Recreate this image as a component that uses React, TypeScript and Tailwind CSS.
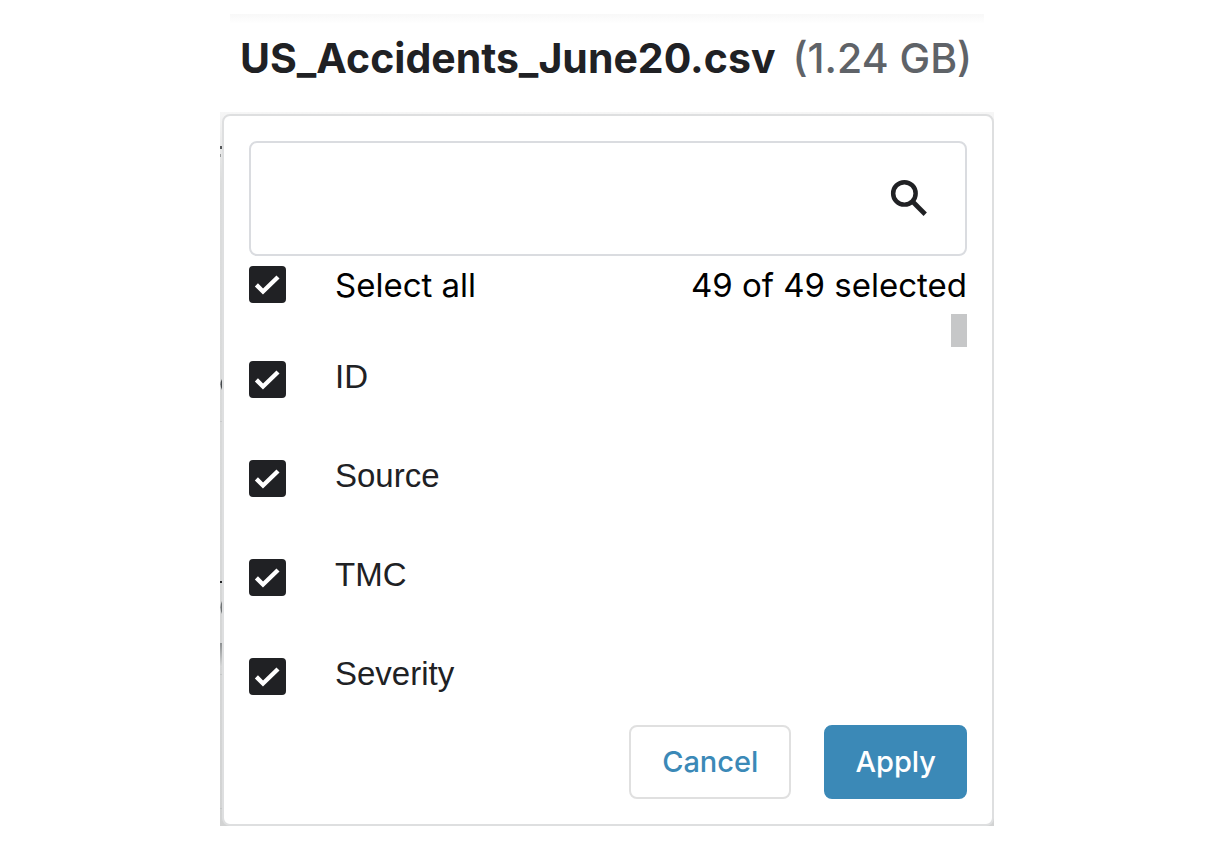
import { useState } from "react";

const COLUMNS = ["ID", "Source", "TMC", "Severity"];
const TOTAL = 49;

type CheckProps = {
  id: string;
  checked: boolean;
  onChange: () => void;
};

function Check({ id, checked, onChange }: CheckProps) {
  return (
    <span className="grid size-[37px] shrink-0">
      <input
        id={id}
        type="checkbox"
        checked={checked}
        onChange={onChange}
        className="col-start-1 row-start-1 size-full appearance-none rounded border-2 border-[#202124] bg-white checked:bg-[#202124]"
      />
      {checked && (
        <svg
          viewBox="0 0 37 37"
          aria-hidden="true"
          className="pointer-events-none col-start-1 row-start-1 size-full fill-none stroke-white"
        >
          <path d="M7.4 18.9L14 25.5L29 11" strokeWidth="4.4" />
        </svg>
      )}
    </span>
  );
}

function SearchIcon() {
  return (
    <svg
      viewBox="0 0 24 24"
      aria-hidden="true"
      className="size-[49px] fill-none stroke-[#202124]"
    >
      <circle cx="9.5" cy="9.5" r="5.5" strokeWidth="2.2" />
      <path d="M13.6 13.6L19.7 19.7" strokeWidth="2.3" />
    </svg>
  );
}

/* Slivers of the page that show beside the open panel. */
function EdgeMarks() {
  return (
    <svg
      aria-hidden="true"
      viewBox="0 0 2 714"
      className="pointer-events-none absolute top-0 left-0 h-[714px] w-0.5"
    >
      <defs>
        <linearGradient id="fade" x1="0" y1="0" x2="0" y2="1">
          <stop offset="0" stopColor="#8d9091" />
          <stop offset="1" stopColor="#d8d9d9" />
        </linearGradient>
      </defs>
      <rect y="34" width="2" height="3" fill="#55585a" />
      <rect y="42" width="1" height="3" fill="#9a9c9d" />
      <path d="M2 267Q-1 272 2 278Z" fill="#44484b" />
      <rect y="309" width="2" height="1" fill="#c8c9ca" />
      <rect y="469" width="2" height="2" fill="#222426" />
      <path d="M2 489Q-1 495 2 502Z" fill="#6f7375" />
      <rect y="531" width="2" height="24" fill="url(#fade)" />
      <rect y="562" width="2" height="1" fill="#c4c6c6" />
      <rect y="696" width="2" height="1" fill="#c4c6c6" />
    </svg>
  );
}

export default function App() {
  const [query, setQuery] = useState("");
  const [off, setOff] = useState<string[]>([]);

  const toggle = (name: string) =>
    setOff((prev) =>
      prev.includes(name) ? prev.filter((n) => n !== name) : [...prev, name],
    );
  const visible = COLUMNS.filter((name) =>
    name.toLowerCase().includes(query.toLowerCase()),
  );

  return (
    <div className="bg-white pt-3.5 pr-2.5 pb-9 font-['Inter',sans-serif]">
      <main className="mx-auto max-w-[774px]">
        <header className="mx-2.5 bg-linear-to-b from-[#f8f8f8] to-white to-10% px-2.5 pt-5 pb-[30px]">
          <h1 className="flex items-center gap-[17px] text-[41px] leading-[48px] font-bold whitespace-nowrap text-[#202124]">
            US_Accidents_June20.csv
            <span className="font-medium text-[#5f6368]">(1.24 GB)</span>
          </h1>
        </header>

        <div className="relative bg-linear-to-b from-[#f6f6f6] via-[#dcdddd] via-10% to-[#d2d3d3] pt-0.5 pl-0.5">
          <EdgeMarks />
          <form
            className="rounded-lg border-2 border-[#dedfe0] bg-white p-[25px]"
            onSubmit={(e) => e.preventDefault()}
          >
            <div className="flex h-[115px] items-center rounded-lg border-2 border-[#dadce0] pr-[31px]">
              <input
                type="text"
                aria-label="Search columns"
                value={query}
                onChange={(e) => setQuery(e.target.value)}
                className="h-full min-w-0 flex-1 px-6 text-[33px] outline-none"
              />
              <SearchIcon />
            </div>

            <div className="mt-2.5 flex items-start text-[33px] leading-[39px] text-black">
              <Check
                id="all"
                checked={off.length === 0}
                onChange={() => setOff(off.length ? [] : COLUMNS)}
              />
              <label htmlFor="all" className="ml-[49px]">
                Select all
              </label>
              <span className="ml-auto">
                {TOTAL - off.length} of {TOTAL} selected
              </span>
            </div>

            <div className="relative mt-[9px]">
              <ul className="flex h-[411px] flex-col gap-[62px] pt-[47px]">
                {visible.map((name) => (
                  <li key={name} className="flex items-start">
                    <Check
                      id={name}
                      checked={!off.includes(name)}
                      onChange={() => toggle(name)}
                    />
                    <label
                      htmlFor={name}
                      className="ml-[49px] font-['Liberation_Sans',sans-serif] text-[33px] leading-8 text-[#202124]"
                    >
                      {name}
                    </label>
                  </li>
                ))}
              </ul>
              <div
                aria-hidden="true"
                className="absolute top-0 right-0 h-[33px] w-4 bg-[#c6c7c8]"
              />
            </div>

            <div className="flex justify-end gap-[33px] text-[29px] leading-[70px] font-medium">
              <button
                type="button"
                className="rounded-lg border-2 border-[#e0e0e0] px-[31px] text-[#3b89b7]"
              >
                Cancel
              </button>
              <button
                type="submit"
                className="rounded-lg border-2 border-[#3b89b7] bg-[#3b89b7] px-[29px] text-white"
              >
                Apply
              </button>
            </div>
          </form>
        </div>
      </main>
    </div>
  );
}
